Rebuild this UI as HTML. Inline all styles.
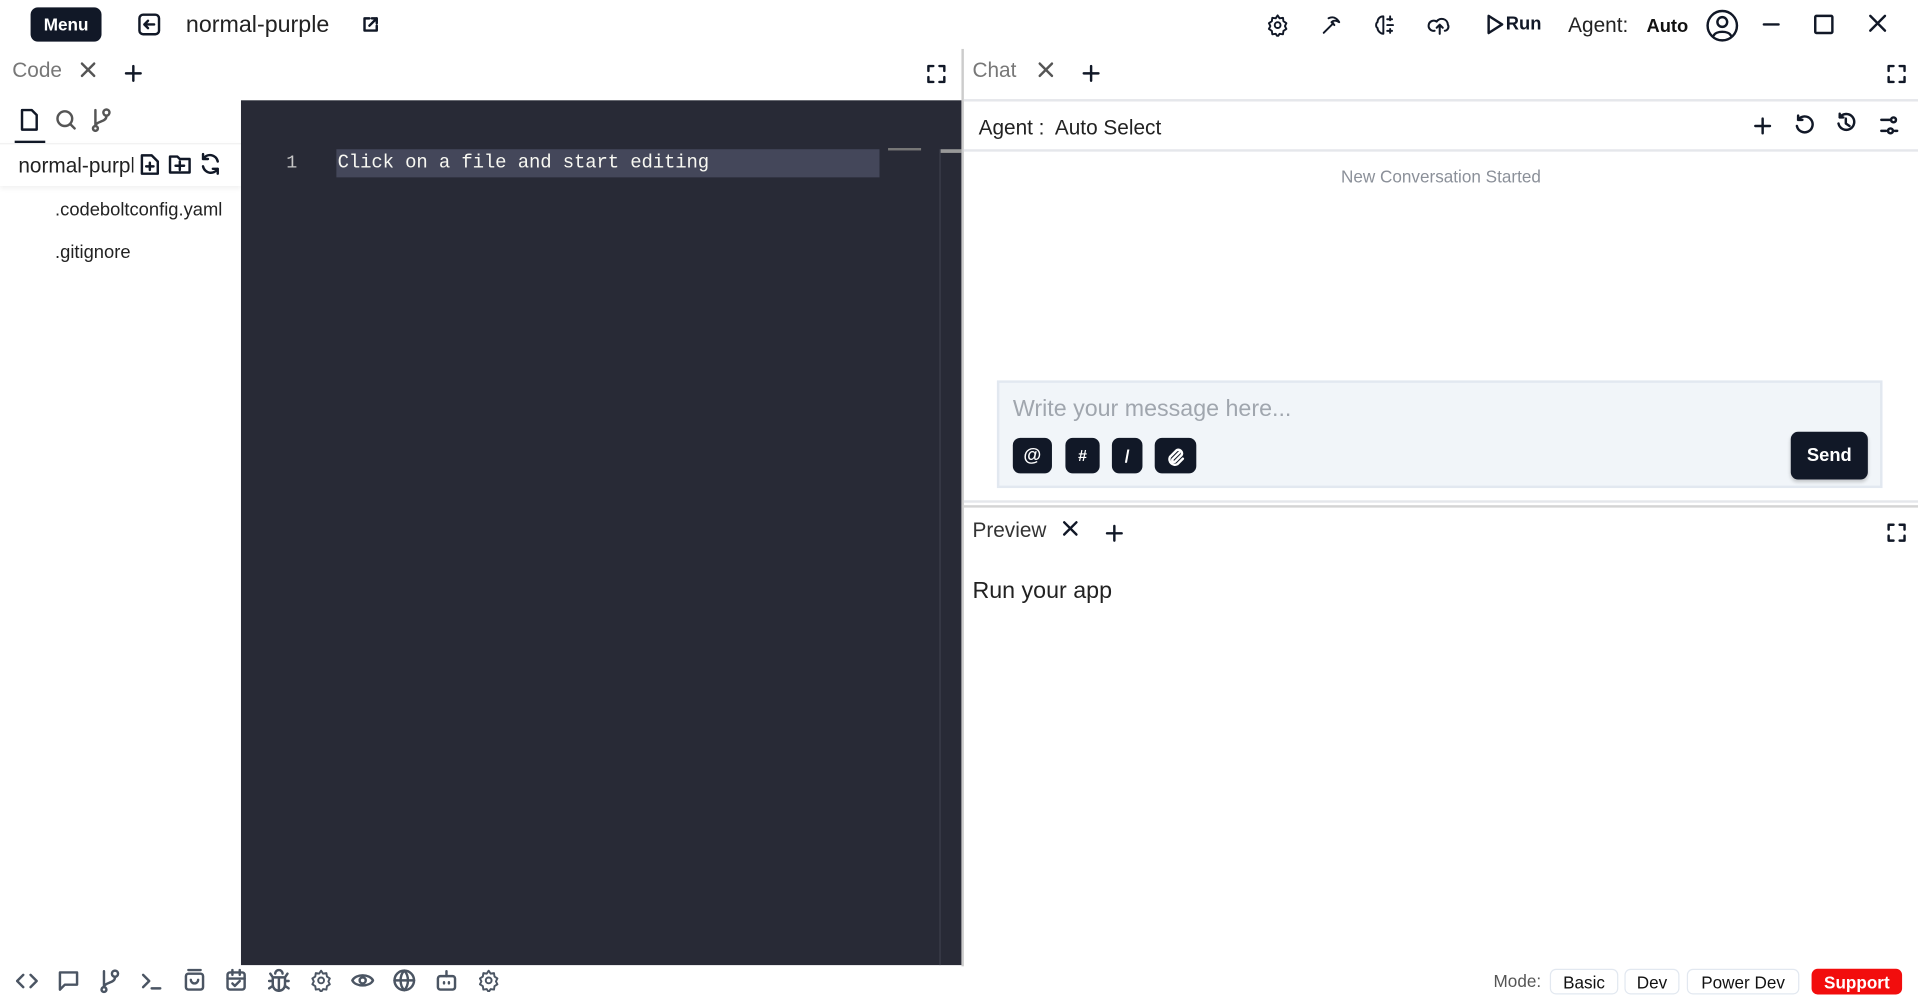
<!DOCTYPE html>
<html><head><meta charset="utf-8"><style>
*{box-sizing:border-box;margin:0;padding:0}
html,body{width:1918px;height:1008px;overflow:hidden;background:#fff}
#s{position:absolute;left:0;top:0;width:1568px;height:824px;transform:scale(1.22321);transform-origin:0 0;font-family:"Liberation Sans",sans-serif;color:#111}
.a{position:absolute}
svg{position:absolute;fill:none;stroke-width:2;stroke-linecap:round;stroke-linejoin:round}
svg:not([stroke]){stroke:#111827}
.btn{position:absolute;background:#111827;color:#fff;border-radius:6px;font-weight:bold;display:flex;align-items:center;justify-content:center}
.btn svg.in{position:static}
.mode{position:absolute;top:792px;height:21px;border:1px solid #e2e8f0;border-radius:5px;font-size:14px;display:flex;align-items:center;justify-content:center;background:#fff}
</style></head><body><div id="s">
<!-- top bar -->
<div class="btn" style="left:25px;top:6px;width:58px;height:28px;font-size:14px">Menu</div>
<svg style="left:112px;top:10px" width="20" height="20" viewBox="0 0 20 20" stroke-width="1.6"><rect x="2" y="2" width="16" height="16" rx="3"/><path d="M14 10H6M9 7l-3 3 3 3"/></svg>
<div class="a" style="left:152px;top:10px;font-size:19px;color:#222">normal-purple</div>
<svg style="left:296px;top:13px" width="14" height="14" viewBox="0 0 14 14" stroke-width="1.4"><path d="M6 2H2v10h10V8M8 2h4v4M12 2L6 8"/></svg>

<svg style="left:1035px;top:11px" width="19" height="19" viewBox="0 0 24 24"><path d="M12 2l2 3 3.5-.5.5 3.5 3 2-1.5 3 1.5 3-3 2-.5 3.5-3.5-.5-2 3-2-3-3.5.5-.5-3.5-3-2 1.5-3L3 10l3-2 .5-3.5L10 5z"/><circle cx="12" cy="12" r="3"/></svg>
<svg style="left:1079px;top:11px" width="19" height="19" viewBox="0 0 24 24"><path d="M4 20l10-10M9 5c4-2 8-1 11 4-3-2-6-2-8 0M12 9l3 3"/></svg>
<svg style="left:1123px;top:11px" width="19" height="19" viewBox="0 0 24 24"><path d="M10 3C6 3 4 6 4 9c-2 1-2 5 0 6 0 3 3 6 6 6M10 3v18M14 6h5M14 12h6M14 18h5M17 3v4M17 16v4"/></svg>
<svg style="left:1167px;top:11px" width="20" height="20" viewBox="0 0 24 24"><path d="M7 17a5 5 0 1 1 2-9 6 6 0 0 1 11 3 4 4 0 0 1-3 6M12 20v-9M9 14l3-3 3 3"/></svg>
<svg style="left:1214px;top:11px" width="16" height="18" viewBox="0 0 16 18"><path d="M3 2l11 7-11 7z"/></svg>
<div class="a" style="left:1231px;top:11px;font-size:15px;font-weight:bold;color:#111827">Run</div>
<div class="a" style="left:1282px;top:11px;font-size:17px;color:#222">Agent:</div>
<div class="a" style="left:1346px;top:13px;font-size:15px;font-weight:bold">Auto</div>
<svg style="left:1394px;top:7px" width="28" height="28" viewBox="0 0 28 28" stroke-width="2.4"><circle cx="14" cy="14" r="12"/><circle cx="14" cy="11" r="4"/><path d="M7 22c2-4 12-4 14 0"/></svg>
<svg style="left:1440px;top:12px" width="16" height="16" viewBox="0 0 16 16" stroke-width="1.6"><path d="M2 8h12"/></svg>
<svg style="left:1482px;top:11px" width="18" height="18" viewBox="0 0 18 18" stroke-width="1.6"><rect x="2" y="2" width="14" height="14" rx="1"/></svg>
<svg style="left:1527px;top:11px" width="16" height="16" viewBox="0 0 16 16" stroke-width="1.6"><path d="M2 2l12 12M14 2L2 14"/></svg>

<!-- code tab row -->
<div class="a" style="left:10px;top:48px;font-size:17px;color:#777">Code</div>
<svg style="left:65px;top:50px" width="14" height="14" viewBox="0 0 14 14" stroke="#555" stroke-width="1.5"><path d="M2 2l10 10M12 2L2 12"/></svg>
<svg style="left:101px;top:52px" width="16" height="16" viewBox="0 0 16 16" stroke-width="1.6"><path d="M8 2v12M2 8h12"/></svg>
<svg style="left:757px;top:52px" width="17" height="17" viewBox="0 0 17 17" stroke-width="1.8"><path d="M2 6V2h4M11 2h4v4M15 11v4h-4M6 15H2v-4"/></svg>

<!-- sidebar -->
<svg style="left:15px;top:88px" width="18" height="20" viewBox="0 0 18 20" stroke-width="1.8"><path d="M3 2h8l4 4v12H3z"/></svg>
<svg style="left:45px;top:89px" width="18" height="18" viewBox="0 0 18 18" stroke="#555" stroke-width="1.6"><circle cx="8" cy="8" r="6"/><path d="M12.5 12.5L16 16"/></svg>
<svg style="left:74px;top:88px" width="18" height="20" viewBox="0 0 18 20" stroke="#555" stroke-width="1.6"><circle cx="4" cy="17" r="2"/><circle cx="13" cy="4" r="2.5"/><path d="M4 2v13M13 7c0 5-9 4-9 8"/></svg>
<div class="a" style="left:12px;top:115px;width:25px;height:2px;background:#111827"></div>
<div class="a" style="left:0;top:117px;width:197px;height:35px;box-shadow:0 2px 4px rgba(0,0,0,.06);border-top:1px solid #f0f0f0"></div>
<div class="a" style="left:15px;top:126px;width:94px;overflow:hidden;white-space:nowrap;font-size:17px;color:#222">normal-purple</div>
<svg style="left:114px;top:125px" width="17" height="19" viewBox="0 0 17 19" stroke-width="1.6"><path d="M2 2h8l5 5v10H2zM8.5 8v6M5.5 11h6"/></svg>
<svg style="left:137px;top:125px" width="20" height="18" viewBox="0 0 20 18" stroke-width="1.6"><path d="M2 3h6l2 2h8v11H2zM10 7v7M6.5 10.5h7"/></svg>
<svg style="left:162px;top:124px" width="20" height="20" viewBox="0 0 20 20" stroke-width="1.6"><path d="M16 8A6.5 6.5 0 0 0 4 6M4 2v4h4M4 12a6.5 6.5 0 0 0 12 2M16 18v-4h-4"/></svg>
<div class="a" style="left:45px;top:163px;font-size:15px;color:#222">.codeboltconfig.yaml</div>
<div class="a" style="left:45px;top:198px;font-size:15px;color:#222">.gitignore</div>

<!-- editor -->
<div class="a" style="left:197px;top:82px;width:589px;height:707px;background:#282a36"></div>
<div class="a" style="left:234px;top:125px;font-family:'Liberation Mono',monospace;font-size:15px;color:#c8c8c8">1</div>
<div class="a" style="left:275px;top:122px;width:444px;height:23px;background:#44475a"></div>
<div class="a" style="left:276px;top:124px;font-family:'Liberation Mono',monospace;font-size:15.5px;color:#f8f8f2;letter-spacing:-.1px">Click on a file and start editing</div>
<div class="a" style="left:726px;top:121px;width:27px;height:2px;background:#777"></div>
<div class="a" style="left:768px;top:122px;width:1px;height:667px;background:#3c3f4c"></div>
<div class="a" style="left:769px;top:122px;width:17px;height:3px;background:#999"></div>

<!-- divider -->
<div class="a" style="left:786px;top:40px;width:2px;height:750px;background:#ccc"></div>

<!-- chat -->
<div class="a" style="left:795px;top:48px;font-size:17px;color:#777">Chat</div>
<svg style="left:848px;top:50px" width="14" height="14" viewBox="0 0 14 14" stroke="#555" stroke-width="1.5"><path d="M2 2l10 10M12 2L2 12"/></svg>
<svg style="left:884px;top:52px" width="16" height="16" viewBox="0 0 16 16" stroke-width="1.6"><path d="M8 2v12M2 8h12"/></svg>
<svg style="left:1542px;top:52px" width="17" height="17" viewBox="0 0 17 17" stroke-width="1.8"><path d="M2 6V2h4M11 2h4v4M15 11v4h-4M6 15H2v-4"/></svg>
<div class="a" style="left:788px;top:81px;width:780px;height:2px;background:#e5e7eb"></div>
<div class="a" style="left:800px;top:95px;font-size:17px;color:#222">Agent :&nbsp; Auto Select</div>
<svg style="left:1433px;top:95px" width="16" height="16" viewBox="0 0 16 16" stroke-width="1.8"><path d="M8 2v12M2 8h12"/></svg>
<svg style="left:1466px;top:93px" width="18" height="18" viewBox="0 0 18 18" stroke-width="1.8"><path d="M4 5a6.5 6.5 0 1 1-1 5M4 1.5V5h3.5"/></svg>
<svg style="left:1500px;top:92px" width="18" height="18" viewBox="0 0 18 18" stroke-width="1.8"><path d="M4 4a6.5 6.5 0 1 1-1 5M4 1v3h3M9 5v4l3 2"/></svg>
<svg style="left:1536px;top:94px" width="17" height="17" viewBox="0 0 17 17" stroke-width="1.7"><path d="M2 4h7M2 13h4M13 13h2"/><circle cx="12" cy="4" r="2"/><circle cx="9.5" cy="13" r="2"/></svg>
<div class="a" style="left:788px;top:122px;width:780px;height:2px;background:#e5e7eb"></div>
<div class="a" style="left:788px;top:136px;width:780px;text-align:center;font-size:14px;color:#8b9099">New Conversation Started</div>

<div class="a" style="left:815px;top:311px;width:724px;height:88px;background:#f1f5f9;border:2px solid #e2e8f0"></div>
<div class="a" style="left:828px;top:324px;font-size:19px;color:#a0a6ae">Write your message here...</div>
<div class="btn" style="left:828px;top:358px;width:32px;height:29px;font-size:15px">@</div>
<div class="btn" style="left:871px;top:358px;width:28px;height:29px;font-size:13px">#</div>
<div class="btn" style="left:909px;top:358px;width:25px;height:29px;font-size:14px">/</div>
<div class="btn" style="left:944px;top:358px;width:34px;height:29px"><svg class="in" width="16" height="16" viewBox="0 0 16 16" stroke="#fff" stroke-width="1.5"><path d="M11 5l-5.5 5.5a1.5 1.5 0 0 0 2 2L13 7a3 3 0 0 0-4-4L3.5 8.5a4.5 4.5 0 0 0 6 6L14 10"/></svg></div>
<div class="btn" style="left:1464px;top:353px;width:63px;height:39px;font-size:15px;box-shadow:0 2px 3px rgba(0,0,0,.2)">Send</div>

<div class="a" style="left:788px;top:409px;width:780px;height:2px;background:#e5e7eb"></div>
<div class="a" style="left:788px;top:413px;width:780px;height:2px;background:#d4d4d4"></div>

<!-- preview -->
<div class="a" style="left:795px;top:424px;font-size:17px;color:#333">Preview</div>
<svg style="left:868px;top:425px" width="14" height="14" viewBox="0 0 14 14" stroke-width="1.5"><path d="M2 2l10 10M12 2L2 12"/></svg>
<svg style="left:903px;top:428px" width="16" height="16" viewBox="0 0 16 16" stroke-width="1.6"><path d="M8 2v12M2 8h12"/></svg>
<svg style="left:1542px;top:427px" width="17" height="17" viewBox="0 0 17 17" stroke-width="1.8"><path d="M2 6V2h4M11 2h4v4M15 11v4h-4M6 15H2v-4"/></svg>
<div class="a" style="left:795px;top:473px;font-size:19px;color:#222">Run your app</div>

<!-- bottom bar -->
<svg style="left:13px;top:794px" width="18" height="16" viewBox="0 0 18 16" stroke="#4b5563" stroke-width="1.6"><path d="M6 3L1 8l5 5M12 3l5 5-5 5"/></svg>
<svg style="left:47px;top:793px" width="18" height="18" viewBox="0 0 18 18" stroke="#4b5563" stroke-width="1.6"><path d="M2 2h14v10H6l-4 4z"/></svg>
<svg style="left:81px;top:792px" width="18" height="20" viewBox="0 0 18 20" stroke="#4b5563" stroke-width="1.6"><circle cx="4" cy="17" r="2"/><circle cx="13" cy="4" r="2.5"/><path d="M4 2v13M13 7c0 5-9 4-9 8"/></svg>
<svg style="left:115px;top:794px" width="18" height="16" viewBox="0 0 18 16" stroke="#4b5563" stroke-width="1.6"><path d="M2 3l5 5-5 5M9 14h7"/></svg>
<svg style="left:150px;top:792px" width="18" height="19" viewBox="0 0 18 19" stroke="#4b5563" stroke-width="1.6"><rect x="2" y="4" width="14" height="13" rx="2"/><path d="M4 1h10M6 9a3 3 0 0 0 6 0"/></svg>
<svg style="left:184px;top:792px" width="18" height="19" viewBox="0 0 18 19" stroke="#4b5563" stroke-width="1.6"><rect x="2" y="3" width="14" height="14" rx="2"/><path d="M6 1v4M12 1v4M2 8h14M6 12l2 2 4-4"/></svg>
<svg style="left:219px;top:792px" width="18" height="19" viewBox="0 0 18 19" stroke="#4b5563" stroke-width="1.6"><path d="M6 4a3 3 0 0 1 6 0M4 7h10v6a5 5 0 0 1-10 0zM9 7v11M1 10h3M14 10h3M1 16l3-2M17 16l-3-2M2 4l2 3M16 4l-2 3"/></svg>
<svg style="left:253px;top:792px" width="19" height="19" viewBox="0 0 24 24" stroke="#4b5563"><path d="M12 2l2 3 3.5-.5.5 3.5 3 2-1.5 3 1.5 3-3 2-.5 3.5-3.5-.5-2 3-2-3-3.5.5-.5-3.5-3-2 1.5-3L3 10l3-2 .5-3.5L10 5z"/><circle cx="12" cy="12" r="3"/></svg>
<svg style="left:287px;top:793px" width="19" height="17" viewBox="0 0 19 17" stroke="#4b5563" stroke-width="1.6"><path d="M1 8.5C4 3 15 3 18 8.5 15 14 4 14 1 8.5z"/><circle cx="9.5" cy="8.5" r="2.5"/></svg>
<svg style="left:321px;top:792px" width="19" height="19" viewBox="0 0 19 19" stroke="#4b5563" stroke-width="1.6"><circle cx="9.5" cy="9.5" r="8"/><path d="M1.5 9.5h16M9.5 1.5c-4 4-4 12 0 16M9.5 1.5c4 4 4 12 0 16"/></svg>
<svg style="left:356px;top:792px" width="18" height="19" viewBox="0 0 18 19" stroke="#4b5563" stroke-width="1.6"><rect x="2" y="6" width="14" height="11" rx="2"/><path d="M9 2v4M7 11v1M11 11v1"/></svg>
<svg style="left:390px;top:792px" width="19" height="19" viewBox="0 0 24 24" stroke="#4b5563"><path d="M12 2l2 3 3.5-.5.5 3.5 3 2-1.5 3 1.5 3-3 2-.5 3.5-3.5-.5-2 3-2-3-3.5.5-.5-3.5-3-2 1.5-3L3 10l3-2 .5-3.5L10 5z"/><circle cx="12" cy="12" r="3"/></svg>

<div class="a" style="left:1221px;top:794px;font-size:14px;color:#555">Mode:</div>
<div class="mode" style="left:1267px;width:56px">Basic</div>
<div class="mode" style="left:1328px;width:45px">Dev</div>
<div class="mode" style="left:1379px;width:92px">Power Dev</div>
<div class="mode" style="left:1481px;width:74px;background:#f20d0d;border-color:#f20d0d;color:#fff;font-weight:bold">Support</div>
</div></body></html>
